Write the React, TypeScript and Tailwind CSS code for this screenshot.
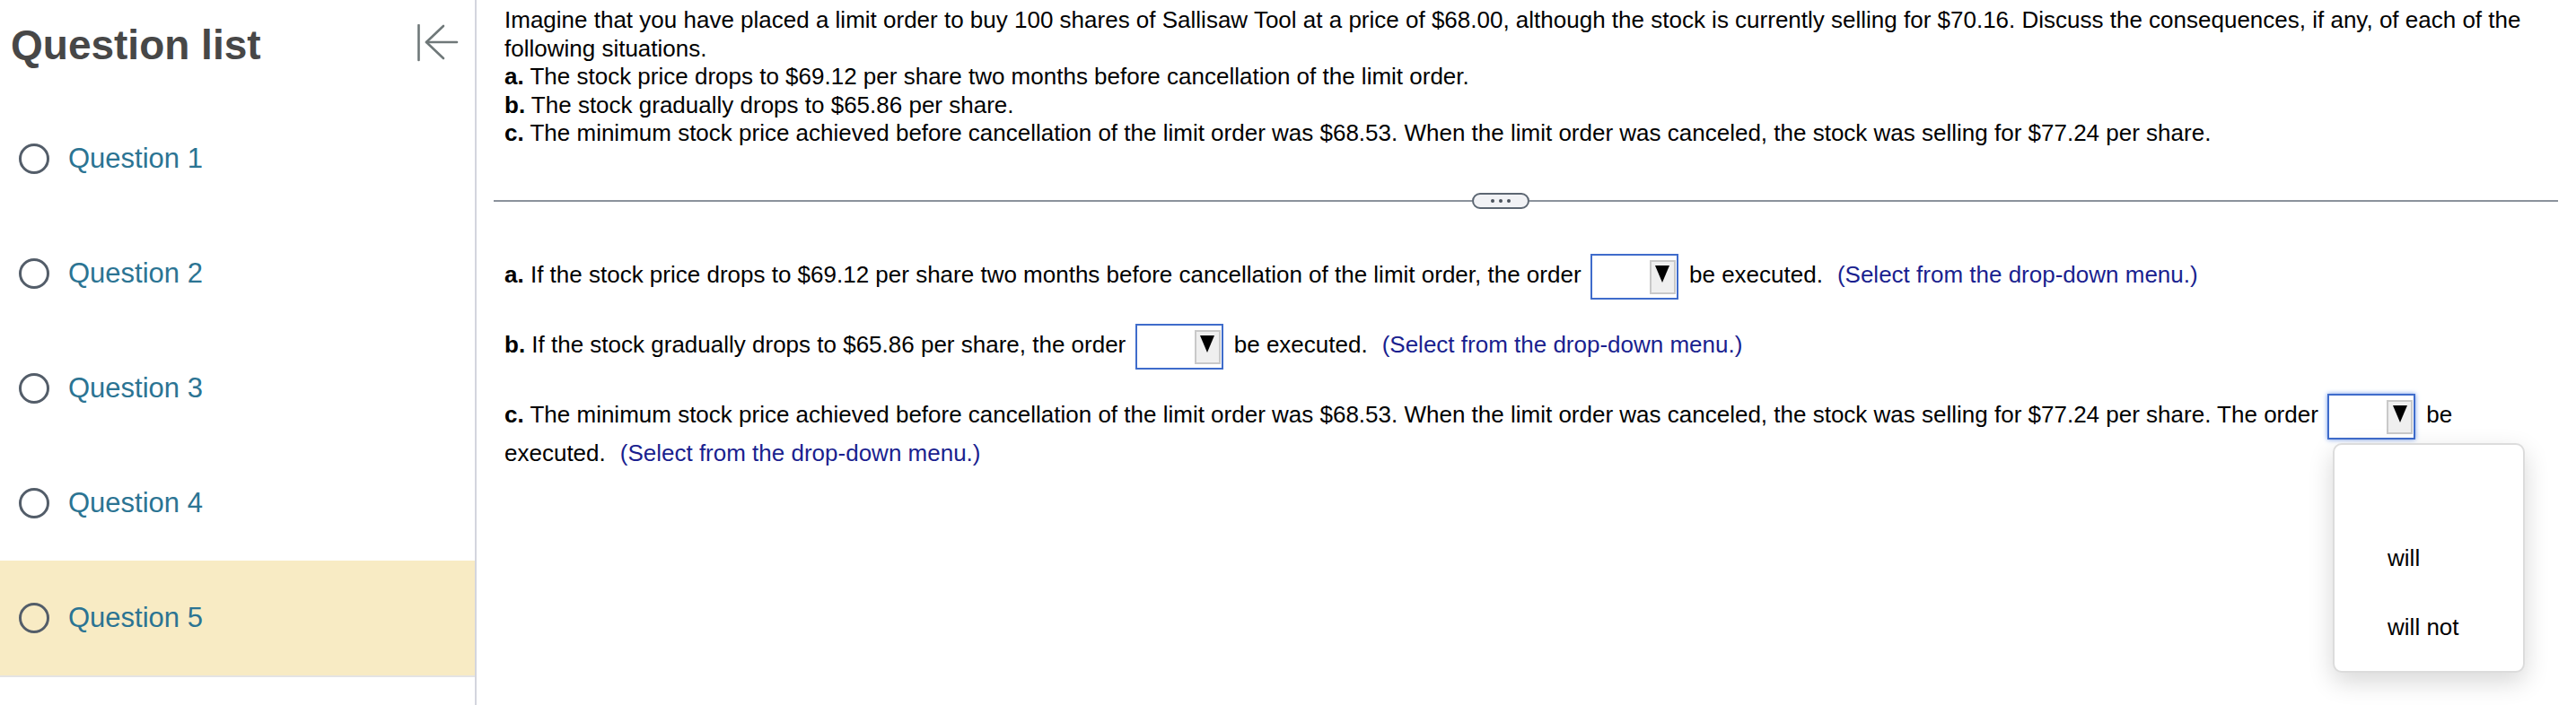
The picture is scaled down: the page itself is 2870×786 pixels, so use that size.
import React from "react";

const questions = ["Question 1", "Question 2", "Question 3", "Question 4", "Question 5"];

function CollapseIcon() {
  return (
    <svg width="48" height="42" viewBox="0 0 48 42" fill="none" stroke="#6f7879" strokeWidth="2.6" strokeLinecap="round" strokeLinejoin="round">
      <line x1="3.5" y1="1" x2="3.5" y2="40" />
      <line x1="12" y1="20" x2="46" y2="20" />
      <polyline points="31,2 12,20 31,38" />
    </svg>
  );
}

function Dropdown({ open = false }: { open?: boolean }) {
  return (
    <span
      className={`relative inline-block align-middle w-[98px] h-[51px] ml-[3px] mr-[5px] border-2 border-[#3f6ccb] bg-white ${
        open ? "shadow-[0_0_5px_#6d97e8]" : ""
      }`}
    >
      <span className="absolute right-[1px] top-[5px] w-[29px] h-[38px] bg-[#efefef] border-2 border-[#c9c9c9] flex justify-center pt-[4px]">
        <svg width="16" height="19" viewBox="0 0 16 19">
          <polygon points="0,0 16,0 8,19" fill="#000" />
        </svg>
      </span>
      {open && (
        <span className="absolute left-[4px] top-[53px] z-10 w-[214px] h-[256px] bg-white border-2 border-[#dcdcdc] rounded-[10px] shadow-[0_10px_28px_rgba(0,0,0,0.16)] flex flex-col pt-[11px]">
          <span className="h-[77px]" />
          <span className="h-[77px] flex items-center pl-[59px] text-black">will</span>
          <span className="h-[77px] flex items-center pl-[59px] text-black">will not</span>
        </span>
      )}
    </span>
  );
}

function Hint() {
  return <span className="ml-[16px] text-[#1a1f8f]">(Select from the drop-down menu.)</span>;
}

export default function App() {
  return (
    <div className="flex w-[2870px] h-[786px] bg-white font-['Liberation_Sans',Arial,sans-serif]">
      {/* Sidebar */}
      <aside className="w-[531px] shrink-0 border-r-2 border-[#d3d5de] flex flex-col">
        <div className="h-[113px] flex items-start justify-between pl-[12px] pr-[18px] pt-[27px]">
          <h1 className="text-[46px] leading-[46px] font-bold text-[#474747]">Question list</h1>
          <CollapseIcon />
        </div>
        {questions.map((q, i) => (
          <div
            key={q}
            className={`flex items-center pl-[21px] gap-[21px] ${
              i === 4 ? "h-[130px] bg-[#f8ebc4] border-b-2 border-[#e4e4e4]" : "h-[128px]"
            }`}
          >
            <span className="w-[34px] h-[34px] rounded-full border-[3px] border-[#535d69]" />
            <span className="text-[31px] text-[#2b7493]">{q}</span>
          </div>
        ))}
      </aside>

      {/* Main */}
      <main className="flex-1 pl-[19px] pr-[20px] text-[26px] leading-[31.6px] text-black">
        <div className="pl-[12px] pr-[20px] pt-[7px]">
          <p>
            Imagine that you have placed a limit order to buy 100 shares of Sallisaw Tool at a price of $68.00, although the stock is
            currently selling for $70.16. Discuss the consequences, if any, of each of the following situations.
          </p>
          <p>
            <b>a.</b> The stock price drops to $69.12 per share two months before cancellation of the limit order.
          </p>
          <p>
            <b>b.</b> The stock gradually drops to $65.86 per share.
          </p>
          <p>
            <b>c.</b> The minimum stock price achieved before cancellation of the limit order was $68.53. When the limit order was canceled,
            the stock was selling for $77.24 per share.
          </p>
        </div>

        {/* Divider */}
        <div className="mt-[50px] h-[18px] flex items-center">
          <div className="w-[1090px] h-[2px] bg-[#8b929c]" />
          <div className="w-[64px] h-[18px] rounded-full border-2 border-[#5c6672] bg-[#f1f2f5] flex items-center justify-center gap-[5px]">
            <span className="w-[4px] h-[4px] rounded-full bg-[#4a525c]" />
            <span className="w-[4px] h-[4px] rounded-full bg-[#4a525c]" />
            <span className="w-[4px] h-[4px] rounded-full bg-[#4a525c]" />
          </div>
          <div className="flex-1 h-[2px] bg-[#8b929c]" />
        </div>

        <div className="pl-[12px] pr-[20px] mt-[50px] flex flex-col gap-[27px]">
          <p>
            <b>a.</b> If the stock price drops to $69.12 per share two months before cancellation of the limit order, the order{" "}
            <Dropdown /> be executed.
            <Hint />
          </p>
          <p>
            <b>b.</b> If the stock gradually drops to $65.86 per share, the order <Dropdown /> be executed.
            <Hint />
          </p>
          <p>
            <b>c.</b> The minimum stock price achieved before cancellation of the limit order was $68.53. When the limit order was canceled,
            the stock was selling for $77.24 per share. The order <Dropdown open /> be executed.
            <Hint />
          </p>
        </div>
      </main>
    </div>
  );
}
